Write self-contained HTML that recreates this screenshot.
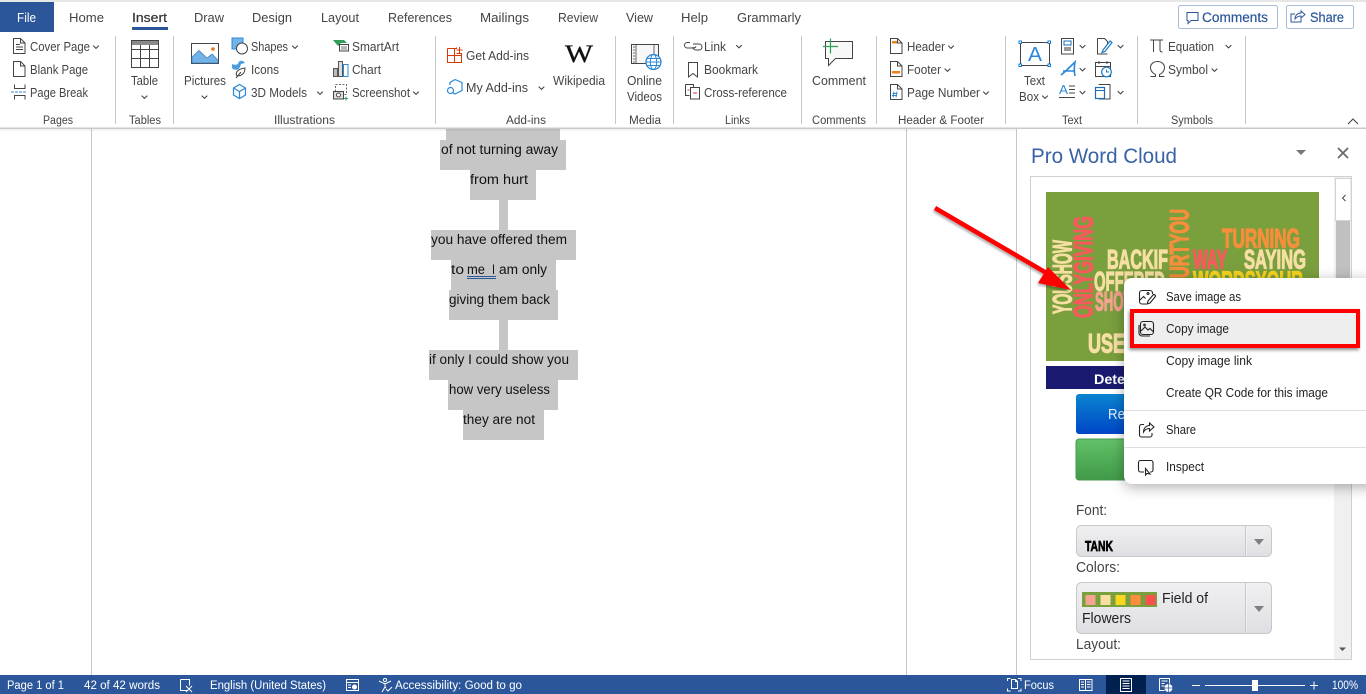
<!DOCTYPE html>
<html lang="en"><head><meta charset="utf-8"><title>Word - Insert</title>
<style>
html,body{margin:0;padding:0;width:1366px;height:694px;overflow:hidden;background:#fff}
svg{display:block;position:absolute;left:0;top:0}
text{font-family:"Liberation Sans",sans-serif;white-space:pre}
.tab{font-size:13px;fill:#444}
.r{font-size:12.5px;fill:#444}
.l{font-size:11.5px;fill:#444}
.d{font-size:13.5px;fill:#111}
.m{font-size:12.5px;fill:#222}
.s{font-size:11.5px;fill:#fff}
.p{font-size:14.5px;fill:#444}
.w{font-weight:bold;font-size:27px;stroke-width:1.2;paint-order:stroke}
.i{fill:none;stroke:#444;stroke-width:1}
.b{fill:none;stroke:#2b88d8;stroke-width:1.2}
.wh{fill:none;stroke:#fff;stroke-width:1}
</style></head><body>
<svg width="1366" height="694" viewBox="0 0 1366 694" xmlns="http://www.w3.org/2000/svg">
<defs>
<path id="c" d="M-2.800 -1.400L0 1.400L2.800 -1.400" fill="none" stroke="#444" stroke-width="1.100"/>
<linearGradient id="gs" x1="0" y1="0" x2="0" y2="1"><stop offset="0" stop-color="#f0f0f2"/><stop offset="1" stop-color="#dfdfe3"/></linearGradient>
<linearGradient id="gb" x1="0" y1="0" x2="0" y2="1"><stop offset="0" stop-color="#0a84d0"/><stop offset="1" stop-color="#0046c8"/></linearGradient>
<linearGradient id="gg" x1="0" y1="0" x2="0" y2="1"><stop offset="0" stop-color="#62c168"/><stop offset="1" stop-color="#409a48"/></linearGradient>
<filter id="sh" x="-20%" y="-20%" width="140%" height="140%"><feDropShadow dx="0" dy="3" stdDeviation="7" flood-color="#000" flood-opacity=".32"/></filter>
<filter id="sh2" x="-10%" y="-30%" width="120%" height="170%"><feDropShadow dx="-1" dy="2" stdDeviation="1.500" flood-color="#000" flood-opacity=".45"/></filter>
<filter id="sh3" x="-20%" y="-20%" width="140%" height="140%"><feDropShadow dx="-1" dy="2" stdDeviation="1" flood-color="#000" flood-opacity=".3"/></filter>
</defs>

<!-- window top -->
<rect width="1366" height="2" fill="#e6e6e6"/>
<!-- document area -->
<rect y="129" width="1016" height="546" fill="#fff"/>
<path d="M91.500 129V675M906.500 129V675M1016.500 129V675" stroke="#c6c6c6"/>

<!-- selection -->
<g fill="#c6c6c6">
<rect x="446" y="128" width="114" height="12"/>
<rect x="440" y="140" width="126" height="30"/>
<rect x="470" y="170" width="66" height="30"/>
<rect x="499" y="200" width="9" height="30"/>
<rect x="431" y="230" width="145" height="30"/>
<rect x="451" y="260" width="105" height="30"/>
<rect x="449" y="290" width="109" height="30"/>
<rect x="499" y="320" width="9" height="30"/>
<rect x="429" y="350" width="149" height="30"/>
<rect x="448" y="380" width="110" height="30"/>
<rect x="463" y="410" width="81" height="30"/>
</g>
<text class="d" x="441" y="154" textLength="117" lengthAdjust="spacingAndGlyphs">of not turning away</text>
<text class="d" x="470" y="184" textLength="58" lengthAdjust="spacingAndGlyphs">from hurt</text>
<text class="d" x="431" y="244" textLength="136" lengthAdjust="spacingAndGlyphs">you have offered them</text>
<text class="d" x="451" y="274" textLength="13" lengthAdjust="spacingAndGlyphs">to</text>
<text class="d" x="467" y="274" textLength="18" lengthAdjust="spacingAndGlyphs">me</text>
<text class="d" x="492" y="274" textLength="3" lengthAdjust="spacingAndGlyphs">I</text>
<text class="d" x="499" y="274" textLength="48" lengthAdjust="spacingAndGlyphs">am only</text>
<path d="M467 276.500H496M467 278.500H496" stroke="#2b579a" stroke-width=".9"/>
<text class="d" x="449" y="304" textLength="101" lengthAdjust="spacingAndGlyphs">giving them back</text>
<text class="d" x="429" y="364" textLength="140" lengthAdjust="spacingAndGlyphs">if only I could show you</text>
<text class="d" x="449" y="394" textLength="101" lengthAdjust="spacingAndGlyphs">how very useless</text>
<text class="d" x="463" y="424" textLength="72" lengthAdjust="spacingAndGlyphs">they are not</text>

<!-- ribbon -->
<rect y="2" width="1366" height="126" fill="#fff"/>
<rect y="127.500" width="1366" height="1.500" fill="#c9c9c9"/>
<rect y="129" width="1016" height="2" fill="#000" opacity=".05"/>
<rect y="2" width="54" height="30" fill="#2b579a"/>
<text x="17" y="22" font-size="13" fill="#fff" textLength="19" lengthAdjust="spacingAndGlyphs">File</text>
<text class="tab" x="69" y="22" textLength="35" lengthAdjust="spacingAndGlyphs">Home</text>
<text class="tab" x="132" y="22" textLength="35" lengthAdjust="spacingAndGlyphs" style="fill:#333;stroke:#333;stroke-width:.2">Insert</text>
<rect x="132" y="27" width="36" height="3" fill="#2b579a"/>
<text class="tab" x="194" y="22" textLength="30" lengthAdjust="spacingAndGlyphs">Draw</text>
<text class="tab" x="252" y="22" textLength="40" lengthAdjust="spacingAndGlyphs">Design</text>
<text class="tab" x="321" y="22" textLength="38" lengthAdjust="spacingAndGlyphs">Layout</text>
<text class="tab" x="388" y="22" textLength="64" lengthAdjust="spacingAndGlyphs">References</text>
<text class="tab" x="480" y="22" textLength="49" lengthAdjust="spacingAndGlyphs">Mailings</text>
<text class="tab" x="558" y="22" textLength="40" lengthAdjust="spacingAndGlyphs">Review</text>
<text class="tab" x="626" y="22" textLength="27" lengthAdjust="spacingAndGlyphs">View</text>
<text class="tab" x="681" y="22" textLength="27" lengthAdjust="spacingAndGlyphs">Help</text>
<text class="tab" x="737" y="22" textLength="64" lengthAdjust="spacingAndGlyphs">Grammarly</text>

<!-- comments / share -->
<rect x="1178.500" y="5.500" width="99" height="23" rx="2" fill="#fff" stroke="#a8bcd8"/>
<path d="M1187 12.500h11v8h-7l-3 3v-3h-1z" fill="none" stroke="#2b579a"/>
<text x="1202" y="22" font-size="13.500" fill="#2b579a" textLength="66" lengthAdjust="spacingAndGlyphs" stroke="#2b579a" stroke-width=".2">Comments</text>
<rect x="1286.500" y="5.500" width="67" height="23" rx="2" fill="#fff" stroke="#a8bcd8"/>
<path d="M1301 16v6h-10v-8h4M1295 19c0-4 3-6 6-6v-2l4 3.500-4 3.500v-2c-3 0-4 1-6 3z" fill="none" stroke="#2b579a"/>
<text x="1310" y="22" font-size="13.500" fill="#2b579a" textLength="34" lengthAdjust="spacingAndGlyphs" stroke="#2b579a" stroke-width=".2">Share</text>

<!-- separators -->
<path d="M115.500 36V124M173.500 36V124M435.500 36V124M615.500 36V124M673.500 36V124M801.500 36V124M876.500 36V124M1005.500 36V124M1137.500 36V124M1245.500 36V124" stroke="#c8c8c8"/>

<!-- Pages -->
<path class="i" d="M13.500 38.500h7l4.500 4.500v10.500h-11.500zM20.500 38.500v4.500h4.500M16 44.500h4M16 47h7M16 49.500h7"/>
<text class="r" x="30" y="51" textLength="60" lengthAdjust="spacingAndGlyphs">Cover Page</text><use href="#c" x="96" y="47"/>
<path class="i" d="M13.500 61.500h7l4.500 4.500v10.500h-11.500zM20.500 61.500v4.500h4.500"/>
<text class="r" x="30" y="74" textLength="58" lengthAdjust="spacingAndGlyphs">Blank Page</text>
<path class="i" d="M14.500 84.500v4h10.500v-4M14.500 99.500v-4h10.500v4"/>
<path d="M11 92H26" stroke="#2b88d8" stroke-dasharray="3 1"/>
<text class="r" x="30" y="97" textLength="58" lengthAdjust="spacingAndGlyphs">Page Break</text>
<text class="l" x="43" y="124" textLength="30" lengthAdjust="spacingAndGlyphs">Pages</text>

<!-- Table -->
<rect x="131" y="40" width="28" height="5" fill="#8a8a8a"/>
<path class="i" d="M131.500 40.500h27v27h-27zM131.500 49.500h27M131.500 58.500h27M140.500 45v22M149.500 45v22"/>
<text class="r" x="131" y="85" textLength="27" lengthAdjust="spacingAndGlyphs">Table</text><use href="#c" x="144.500" y="97"/>
<text class="l" x="129" y="124" textLength="32" lengthAdjust="spacingAndGlyphs">Tables</text>

<!-- Illustrations -->
<rect x="191.500" y="43.500" width="27" height="20" fill="#fff" stroke="#444"/>
<path d="M192 63V57l7-6.500 8 7.500 5-4 6 6v3z" fill="#72b3e8" stroke="#3a7cb8" stroke-width=".7"/>
<circle cx="213" cy="49" r="1.800" fill="#e8751a"/>
<text class="r" x="184" y="85" textLength="42" lengthAdjust="spacingAndGlyphs">Pictures</text><use href="#c" x="204.500" y="97"/>
<rect x="232" y="38" width="11" height="11" fill="#72b3e8" stroke="#2b88d8"/>
<circle cx="242" cy="48.500" r="5.500" fill="#fff" stroke="#444"/>
<text class="r" x="251" y="51" textLength="37" lengthAdjust="spacingAndGlyphs">Shapes</text><use href="#c" x="295" y="47"/>
<path d="M232 68c3 3 7 2 8-1l1-3 4-1-2-2c-3-1-5 1-5 3-2 1-4 1-6 0 0 1 0 3 0 4z" fill="#4a9ee0"/>
<path class="i" d="M237 76c-2-3 0-7 8-8 0 5-3 8-8 8zM236 78l5-6"/>
<text class="r" x="251" y="74" textLength="28" lengthAdjust="spacingAndGlyphs">Icons</text>
<path class="b" d="M239.500 84.500l6 3.500v7l-6 3.500-6-3.500v-7zM233.500 88l6 3.500 6-3.500M239.500 91.500v7"/>
<text class="r" x="251" y="97" textLength="56" lengthAdjust="spacingAndGlyphs">3D Models</text><use href="#c" x="320" y="93"/>
<path d="M333 40h11l3 3h-6l-3 3-5-6z" fill="#2e9e58"/>
<rect x="339.500" y="44.500" width="9" height="6.500" fill="#fff" stroke="#444"/>
<path d="M341 47h6M341 49h6" stroke="#444" stroke-width=".7"/>
<text class="r" x="352" y="51" textLength="47" lengthAdjust="spacingAndGlyphs">SmartArt</text>
<rect x="333.500" y="68.500" width="4" height="8" fill="#bbb" stroke="#555"/>
<rect x="338.500" y="61.500" width="4" height="15" fill="#ddd" stroke="#555"/>
<rect x="343.500" y="64.500" width="4.500" height="12" fill="#fff" stroke="#2b88d8"/>
<text class="r" x="352" y="74" textLength="29" lengthAdjust="spacingAndGlyphs">Chart</text>
<rect x="335.500" y="84.500" width="11" height="10" fill="none" stroke="#666" stroke-dasharray="2 1.500"/>
<rect x="333.500" y="91.500" width="10" height="7.500" fill="#ddd" stroke="#444"/>
<circle cx="338.500" cy="95" r="2" fill="#fff" stroke="#444"/>
<path d="M346 96.500v4M344 98.500h4" stroke="#2e9e58"/>
<text class="r" x="352" y="97" textLength="58" lengthAdjust="spacingAndGlyphs">Screenshot</text><use href="#c" x="416" y="93"/>
<text class="l" x="274" y="124" textLength="61" lengthAdjust="spacingAndGlyphs">Illustrations</text>

<!-- Add-ins -->
<path d="M447.500 48.500h9v-1M447.500 48.500v14h14v-9h-5M447.500 55.500h14M454.500 48.500v14M459.500 47v6M456.500 50h6" fill="none" stroke="#d83b01"/>
<text class="r" x="466" y="60" textLength="63" lengthAdjust="spacingAndGlyphs">Get Add-ins</text>
<path class="b" d="M455 79.500l7 3v8l-7 3.500-3-1.500M450 85v-2.500l5-3"/>
<circle cx="450.500" cy="90.500" r="3" fill="none" stroke="#2b88d8" stroke-width="1.200"/>
<text class="r" x="466" y="92" textLength="62" lengthAdjust="spacingAndGlyphs">My Add-ins</text><use href="#c" x="541.500" y="88"/>
<text x="565" y="62" font-size="25" fill="#111" stroke="#111" stroke-width=".35" textLength="28" lengthAdjust="spacingAndGlyphs" style="font-family:'Liberation Serif',serif">W</text>
<text class="r" x="553" y="85" textLength="52" lengthAdjust="spacingAndGlyphs">Wikipedia</text>
<text class="l" x="506" y="124" textLength="40" lengthAdjust="spacingAndGlyphs">Add-ins</text>

<!-- Media -->
<rect x="631.500" y="44.500" width="27" height="19" fill="#f7f7f7" stroke="#444"/>
<path d="M636 44v20M654 44v20M633 47h2M633 50h2M633 53h2M633 56h2M633 59h2M633 62h2" stroke="#444" stroke-width=".8"/>
<circle cx="653.500" cy="62" r="7.500" fill="#fff" stroke="#2b88d8" stroke-width="1.300"/>
<ellipse cx="653.500" cy="62" rx="3.200" ry="7.500" fill="none" stroke="#2b88d8"/>
<path d="M646 62h15M647 58.500h13M647 65.500h13" stroke="#2b88d8" stroke-width=".9"/>
<text class="r" x="627" y="85" textLength="35" lengthAdjust="spacingAndGlyphs">Online</text>
<text class="r" x="627" y="101" textLength="35" lengthAdjust="spacingAndGlyphs">Videos</text>
<text class="l" x="629" y="124" textLength="32" lengthAdjust="spacingAndGlyphs">Media</text>

<!-- Links -->
<path class="i" d="M690 42.500h-2.500c-2 0-3 1.300-3 2.700s1 2.800 3 2.800h6c1 0 2-.5 2.500-1.500M693 44h6c2 0 3 1.500 3 3s-1 3-3 3h-3c-2 0-3-1.500-3-3"/>
<text class="r" x="704" y="51" textLength="22" lengthAdjust="spacingAndGlyphs">Link</text><use href="#c" x="739" y="46.500"/>
<path class="i" d="M688.500 62.500h9v14.500l-4.500-3.500-4.500 3.500z"/>
<text class="r" x="704" y="74" textLength="54" lengthAdjust="spacingAndGlyphs">Bookmark</text>
<path class="i" d="M685.500 84.500h8v3M685.500 84.500v11h4M690.500 87.500h9v11.500h-9z"/>
<path d="M687.500 90h2M693 93h4" stroke="#d13438"/>
<text class="r" x="704" y="97" textLength="83" lengthAdjust="spacingAndGlyphs">Cross-reference</text>
<text class="l" x="725" y="124" textLength="25" lengthAdjust="spacingAndGlyphs">Links</text>

<!-- Comments -->
<path d="M825.500 41.500h27v17h-17l-7 7v-7h-3z" fill="#f8f8f8" stroke="#444"/>
<path d="M823 46.500h15M830.500 38.500v15" stroke="#2e9e58" stroke-width="1.200"/>
<text class="r" x="812" y="85" textLength="54" lengthAdjust="spacingAndGlyphs">Comment</text>
<text class="l" x="812" y="124" textLength="54" lengthAdjust="spacingAndGlyphs">Comments</text>

<!-- Header & Footer -->
<path class="i" d="M890.500 38.500h7l4.500 4.500v10.500h-11.500zM897.500 38.500v4.500h4.500"/><rect x="892" y="41" width="5" height="2.500" fill="#e8851a"/>
<text class="r" x="907" y="51" textLength="38" lengthAdjust="spacingAndGlyphs">Header</text><use href="#c" x="951" y="47"/>
<path class="i" d="M890.500 61.500h7l4.500 4.500v10.500h-11.500zM897.500 61.500v4.500h4.500"/><rect x="892" y="71" width="8" height="2.500" fill="#e8851a"/>
<text class="r" x="907" y="74" textLength="34" lengthAdjust="spacingAndGlyphs">Footer</text><use href="#c" x="947.500" y="70"/>
<path class="i" d="M890.500 84.500h7l4.500 4.500v10.500h-11.500zM897.500 84.500v4.500h4.500"/>
<path d="M894 91.500l-1 6M897 91.500l-1 6M892.500 93.500h5M892 95.500h5" stroke="#2b88d8" stroke-width=".9"/>
<text class="r" x="907" y="97" textLength="73" lengthAdjust="spacingAndGlyphs">Page Number</text><use href="#c" x="986" y="93"/>
<text class="l" x="898" y="124" textLength="86" lengthAdjust="spacingAndGlyphs">Header &amp; Footer</text>

<!-- Text -->
<rect x="1020.500" y="42.500" width="29" height="23" fill="#fff" stroke="#444"/>
<g fill="#fff" stroke="#1a7cc8"><rect x="1019" y="41" width="2.500" height="2.500"/><rect x="1048" y="41" width="2.500" height="2.500"/><rect x="1019" y="64" width="2.500" height="2.500"/><rect x="1048" y="64" width="2.500" height="2.500"/></g>
<text x="1028" y="61" font-size="20" fill="#2b88d8" textLength="14" lengthAdjust="spacingAndGlyphs">A</text>
<text class="r" x="1024" y="85" textLength="21" lengthAdjust="spacingAndGlyphs">Text</text>
<text class="r" x="1019" y="101" textLength="20" lengthAdjust="spacingAndGlyphs">Box</text><use href="#c" x="1045" y="97"/>
<rect x="1061.500" y="38.500" width="12" height="15.500" fill="#fff" stroke="#444"/>
<rect x="1064" y="41" width="7" height="4" fill="#fff" stroke="#1a6fb8"/><rect x="1064" y="47" width="7" height="4" fill="#999"/>
<use href="#c" x="1082.500" y="46.500"/>
<path d="M1061 75c4-3 9-8 14-13-1 5-1 9 0 14M1063 71h11" fill="none" stroke="#2b88d8" stroke-width="1.600"/>
<use href="#c" x="1082.500" y="69.500"/>
<text x="1059" y="94" font-size="13" fill="#2b88d8" textLength="9" lengthAdjust="spacingAndGlyphs">A</text>
<path d="M1069 86h6M1069 89.500h6M1069 93h6" stroke="#444" stroke-width=".9"/><path d="M1059 97.500h16" stroke="#444"/>
<use href="#c" x="1082.500" y="92.500"/>
<path class="i" d="M1097.500 38.500h7l3 3v3M1097.500 38.500v15.500h10"/>
<path d="M1103 50l7-9 2 1.500-7 9-3 1z" fill="#fff" stroke="#1a7cc8" stroke-width="1.200"/>
<use href="#c" x="1120.500" y="46.500"/>
<rect x="1095.500" y="62.500" width="15" height="14" fill="#fff" stroke="#444"/><path d="M1095 66.500h16M1099 61v3M1107 61v3" stroke="#444"/>
<circle cx="1106.500" cy="72" r="4.800" fill="#fff" stroke="#1a7cc8" stroke-width="1.200"/><path d="M1106.500 69.500v2.500h2.500" fill="none" stroke="#1a7cc8"/>
<path class="i" d="M1098.500 84.500h11.500v14.500h-11"/><rect x="1095.500" y="87.500" width="9" height="11" fill="#fff" stroke="#1a6fb8" stroke-width="1.200"/><path d="M1096 90.500h8" stroke="#1a6fb8"/>
<use href="#c" x="1120.500" y="92.500"/>
<text class="l" x="1062" y="124" textLength="20" lengthAdjust="spacingAndGlyphs">Text</text>

<!-- Symbols -->
<path class="i" d="M1150 40h13M1153.500 40v12M1160 40v10c0 1.500 1 2 2.500 2"/>
<text class="r" x="1168" y="51" textLength="46" lengthAdjust="spacingAndGlyphs">Equation</text><use href="#c" x="1228.500" y="46.500"/>
<path class="i" d="M1150.500 76.500h5v-2c-3-1.500-5-4-5-7 0-3.500 3-6 7-6s7 2.500 7 6c0 3-2 5.500-5 7v2h5"/>
<text class="r" x="1168" y="74" textLength="40" lengthAdjust="spacingAndGlyphs">Symbol</text><use href="#c" x="1214.500" y="70"/>
<text class="l" x="1171" y="124" textLength="42" lengthAdjust="spacingAndGlyphs">Symbols</text>
<path d="M1348 124l5-5 5 5" fill="none" stroke="#444" stroke-width="1.100"/>

<!-- Pane -->
<text x="1031" y="163" font-size="21" fill="#3a62a6" textLength="146" lengthAdjust="spacingAndGlyphs">Pro Word Cloud</text>
<path d="M1296 150h10l-5 5z" fill="#777"/>
<path d="M1338 148l10 10M1348 148l-10 10" stroke="#666" stroke-width="1.700"/>
<rect x="1030.500" y="176.500" width="321" height="483" fill="#fff" stroke="#d0d0d0"/>
<rect x="1334" y="177" width="17" height="482" fill="#f0f0f0"/>
<rect x="1336" y="221" width="14" height="200" fill="#c0c0c0"/>
<rect x="1335.500" y="178.500" width="15.500" height="42" fill="#fff" stroke="#d4d4d4"/>
<path d="M1345.500 195l-3 3 3 3" fill="none" stroke="#444"/>
<path d="M1339 647.500h7l-3.500 3.500z" fill="#555"/>

<!-- word cloud -->
<rect x="1046" y="192" width="273" height="169" fill="#7a9f3d"/>
<text class="w" transform="translate(1071.400 314) rotate(-90)" textLength="74" lengthAdjust="spacingAndGlyphs" fill="#f6dfa2" stroke="#f6dfa2">YOUSHOW</text>
<text class="w" transform="translate(1092.400 318) rotate(-90)" textLength="102" lengthAdjust="spacingAndGlyphs" fill="#f55b5b" stroke="#f55b5b">ONLYGIVING</text>
<text class="w" transform="translate(1188.400 290) rotate(-90)" textLength="81" lengthAdjust="spacingAndGlyphs" fill="#f78e3b" stroke="#f78e3b">HURTYOU</text>
<text class="w" x="1107" y="268.400" textLength="61" lengthAdjust="spacingAndGlyphs" fill="#f6dfa2" stroke="#f6dfa2">BACKIF</text>
<text class="w" x="1222" y="247.400" textLength="78" lengthAdjust="spacingAndGlyphs" fill="#f78e3b" stroke="#f78e3b">TURNING</text>
<text class="w" x="1193" y="268.400" textLength="34" lengthAdjust="spacingAndGlyphs" fill="#f55b5b" stroke="#f55b5b">WAY</text>
<text class="w" x="1244" y="268.400" textLength="62" lengthAdjust="spacingAndGlyphs" fill="#f6dfa2" stroke="#f6dfa2">SAYING</text>
<text class="w" x="1193" y="290" textLength="110" lengthAdjust="spacingAndGlyphs" fill="#f7d31e" stroke="#f7d31e">WORDSYOUR</text>
<text class="w" x="1094" y="290.400" textLength="71" lengthAdjust="spacingAndGlyphs" fill="#f6dfa2" stroke="#f6dfa2">OFFERED</text>
<text class="w" x="1095" y="310.400" textLength="41" lengthAdjust="spacingAndGlyphs" fill="#f7a392" stroke="#f7a392">SHOW</text>
<text class="w" x="1088" y="352.400" textLength="48" lengthAdjust="spacingAndGlyphs" fill="#f6dfa2" stroke="#f6dfa2">USEL</text>
<rect x="1046" y="366" width="273" height="23" fill="#191970"/>
<text x="1094" y="384" font-size="14" font-weight="bold" fill="#fff" textLength="31" lengthAdjust="spacingAndGlyphs">Dete</text>
<rect x="1076" y="394" width="170" height="40" rx="3" fill="url(#gb)"/>
<text x="1108" y="419" font-size="14.500" fill="#e6f0ff" textLength="17" lengthAdjust="spacingAndGlyphs">Re</text>
<rect x="1076" y="439" width="170" height="41" rx="3" fill="url(#gg)" stroke="#47994e"/>

<text class="p" x="1076" y="515" textLength="31" lengthAdjust="spacingAndGlyphs">Font:</text>
<rect x="1076.500" y="525.500" width="195" height="31" rx="5" fill="url(#gs)" stroke="#c8c8c8"/>
<path d="M1246 526V556" stroke="#fafafa" stroke-width="1"/><path d="M1245.500 526V556" stroke="#c8c8c8"/>
<path d="M1254 539h10l-5 6z" fill="#808080"/>
<text x="1085" y="551" font-size="15" font-weight="bold" fill="#000" stroke="#000" stroke-width=".7" textLength="28" lengthAdjust="spacingAndGlyphs">TANK</text>
<text class="p" x="1076" y="572" textLength="44" lengthAdjust="spacingAndGlyphs">Colors:</text>
<rect x="1076.500" y="582.500" width="195" height="51" rx="5" fill="url(#gs)" stroke="#c8c8c8"/>
<path d="M1246 583V633" stroke="#fafafa"/><path d="M1245.500 583V633" stroke="#c8c8c8"/>
<path d="M1254 606h10l-5 6z" fill="#808080"/>
<rect x="1082" y="592" width="75" height="15" fill="#7a9f3d"/>
<rect x="1085.500" y="595" width="10" height="10" fill="#f7a392"/>
<rect x="1100.500" y="595" width="10" height="10" fill="#fbdfa2"/>
<rect x="1115.500" y="595" width="10" height="10" fill="#fcd621"/>
<rect x="1130.500" y="595" width="10" height="10" fill="#fb8e3b"/>
<rect x="1145.500" y="595" width="10" height="10" fill="#fb5050"/>
<text x="1162" y="603" font-size="14.500" fill="#222" textLength="46" lengthAdjust="spacingAndGlyphs">Field of</text>
<text x="1082" y="623" font-size="14.500" fill="#222" textLength="49" lengthAdjust="spacingAndGlyphs">Flowers</text>
<text class="p" x="1076" y="649" textLength="45" lengthAdjust="spacingAndGlyphs">Layout:</text>

<!-- red arrow -->
<g filter="url(#sh3)">
<path d="M935 208L1050 275" stroke="#f00" stroke-width="4.500"/>
<path d="M1071 290L1048 267L1038 283z" fill="#f00"/>
</g>

<!-- context menu -->
<rect x="1124" y="278" width="260" height="206" rx="8" fill="#fff" filter="url(#sh)"/>
<rect x="1132" y="311" width="226" height="35" fill="#eeeeee" stroke="#f00" stroke-width="4" filter="url(#sh2)"/>
<path d="M1124 410.500H1366M1124 447.500H1366" stroke="#dedede"/>
<text class="m" x="1166" y="301" textLength="75" lengthAdjust="spacingAndGlyphs">Save image as</text>
<text class="m" x="1166" y="333" textLength="63" lengthAdjust="spacingAndGlyphs">Copy image</text>
<text class="m" x="1166" y="365" textLength="86" lengthAdjust="spacingAndGlyphs">Copy image link</text>
<text class="m" x="1166" y="397" textLength="162" lengthAdjust="spacingAndGlyphs">Create QR Code for this image</text>
<text class="m" x="1166" y="434" textLength="30" lengthAdjust="spacingAndGlyphs">Share</text>
<text class="m" x="1166" y="471" textLength="38" lengthAdjust="spacingAndGlyphs">Inspect</text>
<g fill="none" stroke="#222" stroke-width="1.100">
<path d="M1146 304h-4a2.500 2.500 0 0 1-2.500-2.500v-8.500a2.500 2.500 0 0 1 2.500-2.500h8a2.500 2.500 0 0 1 2.500 2.500v1M1140 300l3.500-3.500 2 2"/>
<circle cx="1148" cy="293.500" r="1"/>
<path d="M1147 304l1-3 5-6a1.400 1.400 0 0 1 2 2l-5 6z"/>
<rect x="1140.500" y="321.500" width="13" height="13" rx="2.500"/>
<path d="M1141 331l4-4 3 3 2-1.500 3 3"/><circle cx="1144.500" cy="325" r=".8"/>
<path d="M1139 325v8a3 3 0 0 0 3 3h8"/>
<path d="M1144 424.500h-2.500a2 2 0 0 0-2 2v8.500a2 2 0 0 0 2 2h8.500a2 2 0 0 0 2-2v-2"/>
<path d="M1143.500 432c0-4 3-6.500 6-6.500v-2.500l4.500 4-4.500 4v-2.500c-2.500 0-4.500 1-6 3.500z"/>
<path d="M1144 472h-3.500a2 2 0 0 1-2-2v-7.500a2 2 0 0 1 2-2h10.500a2 2 0 0 1 2 2v7.500a2 2 0 0 1-2 2h-1"/>
<path d="M1145.500 468.500v6.500l1.500-1.500 3 .5z"/>
</g>

<!-- Status bar -->
<rect y="675" width="1366" height="19" fill="#2b579a"/>
<text class="s" x="7" y="689" textLength="57" lengthAdjust="spacingAndGlyphs">Page 1 of 1</text>
<text class="s" x="84" y="689" textLength="76" lengthAdjust="spacingAndGlyphs">42 of 42 words</text>
<path class="wh" d="M180.500 679.500h9v6M180.500 679.500v11h7M186 686l6 6M192 686l-6 6" stroke-width=".9"/>
<text class="s" x="210" y="689" textLength="116" lengthAdjust="spacingAndGlyphs">English (United States)</text>
<path class="wh" d="M346.500 679.500h12v11h-12zM346.500 682.500h12M348 685h3M348 687.500h3"/><circle cx="354.500" cy="687" r="2.500" fill="#fff"/>
<circle cx="385" cy="680" r="1.600" class="wh"/><path class="wh" d="M379 681l5 2.500h2l5-2.500M385 684v3l-3 5M385 687l1 1"/><path class="wh" d="M386 689l2 2 4-4"/>
<text class="s" x="395" y="689" textLength="127" lengthAdjust="spacingAndGlyphs">Accessibility: Good to go</text>
<path class="wh" d="M1007.500 681v-2.500h3M1018 678.500h3v2.500M1007.500 688.500v2.500h3M1018 691h3v-2.500M1011.500 679.500h4l2 2v7h-6zM1015.500 679.500v2h2"/>
<text class="s" x="1024" y="689" textLength="30" lengthAdjust="spacingAndGlyphs">Focus</text>
<path class="wh" d="M1079.500 679.500h6v11h-6zM1085.500 679.500h6.500v11h-6.500zM1081 682h3M1081 684.500h3M1081 687h3M1087 682h3.500M1087 684.500h3.500M1087 687h3.500"/>
<rect x="1106" y="675" width="40" height="19" fill="#002050"/>
<path class="wh" d="M1120.500 678.500h11v13h-11zM1122.500 681h7M1122.500 683.500h7M1122.500 686h7M1122.500 688.500h7"/>
<path class="wh" d="M1159.500 678.500h10v5M1159.500 678.500v12h5M1161.500 681h6M1161.500 683.500h3M1161.500 686h3"/><circle cx="1168.500" cy="688" r="4" fill="#fff"/><path d="M1164.500 688h8M1168.500 684v8" stroke="#2b579a" stroke-width=".7"/>
<path d="M1192 685.500h8M1205 685.500h100M1310 685.500h8M1314 681.500v8" stroke="#fff"/>
<rect x="1252" y="680" width="6" height="11" fill="#fff"/>
<text class="s" x="1332" y="689" textLength="26" lengthAdjust="spacingAndGlyphs">100%</text>
</svg>
</body></html>
